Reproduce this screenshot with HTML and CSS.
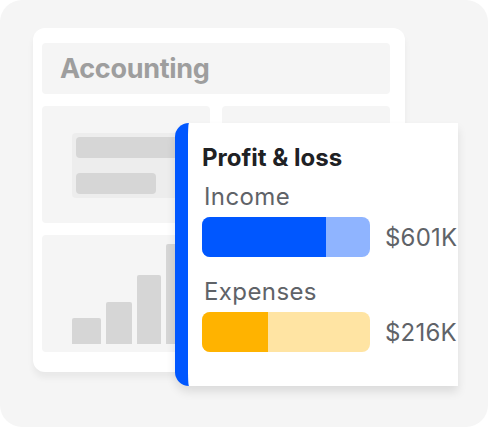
FILE: index.html
```html
<!DOCTYPE html>
<html>
<head>
<meta charset="utf-8">
<link rel="stylesheet" href="styles.css">
</head>
<body>
<div class="frame">
  <div class="panel">
    <div class="header">Accounting</div>
    <div class="grid">
      <div class="tile">
        <div class="list">
          <div class="line line-long"></div>
          <div class="line line-short"></div>
        </div>
      </div>
      <div class="tile"></div>
      <div class="tile tile-wide">
        <div class="chart">
          <div class="bar" style="height:26px"></div>
          <div class="bar" style="height:42px"></div>
          <div class="bar" style="height:69px"></div>
          <div class="bar" style="height:100px"></div>
        </div>
      </div>
    </div>
  </div>
  <div class="card">
    <div class="card-title">Profit &amp; loss</div>
    <div class="metric">
      <div class="metric-label">Income</div>
      <div class="metric-row">
        <div class="meter meter-income"><div class="meter-fill" style="width:124px"></div></div>
        <div class="metric-value">$601K</div>
      </div>
    </div>
    <div class="metric metric-next">
      <div class="metric-label">Expenses</div>
      <div class="metric-row">
        <div class="meter meter-expense"><div class="meter-fill" style="width:66px"></div></div>
        <div class="metric-value">$216K</div>
      </div>
    </div>
  </div>
</div>
</body>
</html>
```
FILE: styles.css
```css
* { box-sizing: border-box; }
html, body { margin: 0; padding: 0; background: #ffffff; }
body { font-family: "Inter", "Roboto", sans-serif; }

.frame {
  position: relative;
  width: 488px;
  height: 427px;
  background: #f5f5f5;
  border-radius: 22px;
  padding: 28px 0 0 33px;
  overflow: hidden;
}

.panel {
  width: 372px;
  height: 344px;
  background: #ffffff;
  border-radius: 12px;
  padding: 15px 15px 20px 9px;
  box-shadow: 0 6px 6px rgba(0,0,0,0.05);
  display: flex;
  flex-direction: column;
  gap: 12px;
}

.header {
  height: 51px;
  background: #f5f5f5;
  border-radius: 4px;
  padding-left: 18px;
  display: flex;
  align-items: center;
  font-size: 27px;
  font-weight: 700;
  color: #9e9e9e;
  letter-spacing: -0.3px;
}

.grid {
  display: grid;
  grid-template-columns: 168px 168px;
  grid-template-rows: 117px 117px;
  gap: 12px;
}

.tile {
  background: #f5f5f5;
  border-radius: 4px;
}

.tile-wide { grid-column: 1 / 3; }

.list {
  margin: 27px 0 0 30px;
  width: 120px;
  background: #ededed;
  border-radius: 4px;
  padding: 4px;
  display: flex;
  flex-direction: column;
  gap: 15px;
}

.line {
  height: 21px;
  background: #d6d6d6;
  border-radius: 4px;
}
.line-long { width: 116px; }
.line-short { width: 80px; }

.chart {
  height: 100%;
  padding: 0 0 8px 30px;
  display: flex;
  align-items: flex-end;
  gap: 5px;
}
.bar {
  width: 27px;
  background: #d6d6d6;
  border-radius: 2px 2px 0 0;
}
.bar:nth-child(1) { width: 29px; }
.bar:nth-child(2) { width: 26px; }
.bar:nth-child(3) { width: 24px; }

.card {
  position: absolute;
  left: 175px;
  top: 123px;
  width: 283px;
  height: 263px;
  background: #ffffff;
  border-left: 13px solid #0057ff;
  border-radius: 14px 0 0 14px;
  box-shadow: 0 6px 10px rgba(0,0,0,0.10);
  padding: 21px 0 0 14px;
  display: flex;
  flex-direction: column;
}

.card-title {
  font-size: 24px;
  font-weight: 700;
  color: #202124;
  line-height: 28px;
  letter-spacing: 0;
}

.metric { display: flex; flex-direction: column; }
.metric-next { margin-top: 10px; }

.metric-label {
  font-size: 24px;
  color: #5f6368;
  line-height: 28px;
  margin-top: 11px;
  padding-left: 2px;
  letter-spacing: 0.4px;
}

.metric-row {
  display: flex;
  align-items: center;
  gap: 15px;
  margin-top: 6px;
}

.meter {
  width: 168px;
  height: 40px;
  border-radius: 8px;
  overflow: hidden;
  display: flex;
}
.meter-fill { height: 100%; }
.meter-income { background: #8fb4ff; }
.meter-income .meter-fill { background: #0057ff; }
.meter-expense { background: #ffe4a3; }
.meter-expense .meter-fill { background: #ffb300; }

.metric-value {
  font-size: 24px;
  color: #5f6368;
  letter-spacing: 0.2px;
  white-space: nowrap;
}
```
